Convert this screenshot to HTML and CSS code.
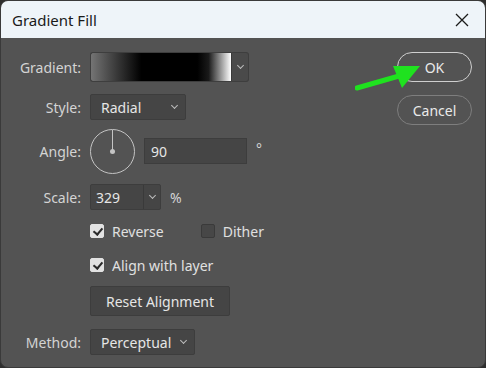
FILE: index.html
```html
<!DOCTYPE html>
<html lang="en">
<head>
    <meta charset="UTF-8">
    <meta name="viewport" content="width=device-width, initial-scale=1.0">
    <title>Gradient Fill</title>
    <link rel="stylesheet" href="styles.css">
</head>
<body>
    <div class="window">
        <div class="titlebar">
            <span class="title">Gradient Fill</span>
            <svg class="close" width="14" height="14" viewBox="0 0 14 14">
                <path d="M1 1L13 13M13 1L1 13" stroke="#1a1a1a" stroke-width="1.3" fill="none"/>
            </svg>
        </div>

        <div class="dialog">
            <div class="form">
                <div class="row row-gradient">
                    <label class="label">Gradient:</label>
                    <div class="gradient-picker">
                        <div class="swatch"></div>
                        <div class="swatch-arrow"><span class="chev"></span></div>
                    </div>
                </div>

                <div class="row row-style">
                    <label class="label">Style:</label>
                    <div class="select select-style">Radial<span class="chev"></span></div>
                </div>

                <div class="row row-angle">
                    <label class="label">Angle:</label>
                    <div class="dial"><span class="dial-line"></span><span class="dial-dot"></span></div>
                    <div class="field field-angle">90</div>
                    <span class="unit unit-deg">°</span>
                </div>

                <div class="row row-scale">
                    <label class="label">Scale:</label>
                    <div class="combo">
                        <span class="combo-value">329</span>
                        <span class="combo-arrow"><span class="chev"></span></span>
                    </div>
                    <span class="unit">%</span>
                </div>

                <div class="row row-check">
                    <span class="label"></span>
                    <div class="check-group">
                        <span class="check checked"></span>
                        <span class="check-text">Reverse</span>
                    </div>
                    <div class="check-group check-dither">
                        <span class="check"></span>
                        <span class="check-text">Dither</span>
                    </div>
                </div>

                <div class="row row-check row-align">
                    <span class="label"></span>
                    <div class="check-group">
                        <span class="check checked"></span>
                        <span class="check-text">Align with layer</span>
                    </div>
                </div>

                <div class="row row-reset">
                    <span class="label"></span>
                    <button class="btn-reset">Reset Alignment</button>
                </div>

                <div class="row row-method">
                    <label class="label">Method:</label>
                    <div class="select select-method">Perceptual<span class="chev"></span></div>
                </div>
            </div>

            <div class="actions">
                <button class="btn-pill btn-ok">OK</button>
                <button class="btn-pill btn-cancel">Cancel</button>
            </div>

            <svg class="arrow" width="70" height="30" viewBox="0 0 70 30">
                <path d="M2 27L44 15" stroke="#1fe21f" stroke-width="5" stroke-linecap="round"/>
                <polygon points="38,5 65,5 47,27" fill="#1fe21f"/>
            </svg>
        </div>
    </div>
</body>
</html>
```

FILE: styles.css
```css
* {
    margin: 0;
    padding: 0;
    box-sizing: border-box;
    font-family: "Noto Sans", "Open Sans", sans-serif;
}

body {
    background-color: #2e2e2e;
    width: 486px;
    height: 368px;
    overflow: hidden;
}

.window {
    width: 486px;
    height: 368px;
    border: 1px solid #3a3a3a;
    border-radius: 8px;
    overflow: hidden;
    background-color: #535353;
    display: flex;
    flex-direction: column;
}

.titlebar {
    height: 37px;
    background-color: #eef4f9;
    display: flex;
    align-items: center;
    justify-content: space-between;
    padding: 0 16px 0 11px;
    flex-shrink: 0;
}

.title {
    font-size: 15px;
    color: #1a1a1a;
}

.close {
    display: block;
}

.dialog {
    flex: 1;
    position: relative;
    display: flex;
    padding: 14px 0 0 0;
}

.form {
    width: 300px;
    display: flex;
    flex-direction: column;
}

.row {
    display: flex;
    align-items: center;
}

.label {
    width: 80px;
    margin-right: 9px;
    text-align: right;
    font-size: 14px;
    color: #d4d4d4;
    flex-shrink: 0;
}

/* gradient */
.row-gradient {
    height: 30px;
}

.gradient-picker {
    display: flex;
    height: 30px;
}

.swatch {
    width: 141px;
    height: 30px;
    border: 1px solid #3e3e3e;
    border-right: none;
    border-radius: 3px 0 0 3px;
    background: linear-gradient(to right, #747474 0%, #3a3a3a 18%, #000 36%, #000 76%, #1a1a1a 84%, #fff 100%);
}

.swatch-arrow {
    width: 18px;
    height: 30px;
    border: 1px solid #3e3e3e;
    border-left: 1px solid #3a3a3a;
    border-radius: 0 3px 3px 0;
    background-color: #4a4a4a;
    display: flex;
    align-items: center;
    justify-content: center;
}

.chev {
    display: inline-block;
    width: 5px;
    height: 5px;
    border-right: 1px solid #bdbdbd;
    border-bottom: 1px solid #bdbdbd;
    transform: rotate(45deg);
    margin-top: -3px;
}

/* selects */
.select {
    height: 26px;
    background-color: #454545;
    border: 1px solid #3d3d3d;
    border-radius: 2px;
    color: #e6e6e6;
    font-size: 14px;
    display: flex;
    align-items: center;
    justify-content: space-between;
    padding: 0 8px 0 10px;
}

.row-style {
    margin-top: 12px;
}

.select-style {
    width: 96px;
}

/* angle */
.row-angle {
    margin-top: 8px;
    height: 46px;
}

.dial {
    width: 45px;
    height: 45px;
    border: 1px solid #c4c4c4;
    border-radius: 50%;
    position: relative;
    flex-shrink: 0;
}

.dial-line {
    position: absolute;
    left: 21px;
    top: 0;
    width: 1px;
    height: 22px;
    background-color: #c4c4c4;
}

.dial-dot {
    position: absolute;
    left: 19px;
    top: 19px;
    width: 5px;
    height: 5px;
    border-radius: 50%;
    background-color: #c4c4c4;
}

.field {
    height: 26px;
    background-color: #454545;
    border: 1px solid #3d3d3d;
    color: #e6e6e6;
    font-size: 14px;
    display: flex;
    align-items: center;
    padding: 0 6px;
}

.field-angle {
    width: 103px;
    margin-left: 9px;
}

.unit {
    font-size: 14px;
    color: #d4d4d4;
    margin-left: 9px;
}

.unit-deg {
    margin-left: 9px;
    margin-top: -6px;
}

/* scale */
.row-scale {
    margin-top: 10px;
    height: 26px;
}

.combo {
    display: flex;
    width: 71px;
    height: 26px;
    border: 1px solid #3d3d3d;
    border-radius: 2px;
    background-color: #454545;
}

.combo-value {
    width: 53px;
    border-right: 1px solid #3a3a3a;
    color: #e6e6e6;
    font-size: 14px;
    display: flex;
    align-items: center;
    padding-left: 5px;
}

.combo-arrow {
    flex: 1;
    display: flex;
    align-items: center;
    justify-content: center;
}

/* checkboxes */
.row-check {
    margin-top: 14px;
    height: 14px;
}

.row-align {
    margin-top: 20px;
}

.check-group {
    display: flex;
    align-items: center;
}

.check {
    width: 14px;
    height: 14px;
    border-radius: 2px;
    border: 1px solid #3a3a3a;
    background-color: #474747;
    position: relative;
}

.check.checked {
    background-color: #e2e2e2;
    border-color: #e2e2e2;
}

.check.checked::after {
    content: "";
    position: absolute;
    left: 4px;
    top: 1px;
    width: 4px;
    height: 7px;
    border-right: 2px solid #2a2a2a;
    border-bottom: 2px solid #2a2a2a;
    transform: rotate(40deg);
}

.check-text {
    font-size: 14px;
    color: #e0e0e0;
    margin-left: 8px;
}

.check-dither {
    margin-left: 37px;
}

/* reset */
.row-reset {
    margin-top: 14px;
}

.btn-reset {
    width: 140px;
    height: 30px;
    background-color: #454545;
    border: 1px solid #3d3d3d;
    border-radius: 2px;
    color: #e6e6e6;
    font-size: 14px;
}

/* method */
.row-method {
    margin-top: 13px;
}

.select-method {
    width: 105px;
}

/* right side buttons */
.actions {
    margin-left: 96px;
    display: flex;
    flex-direction: column;
    gap: 13px;
}

.btn-pill {
    width: 75px;
    height: 30px;
    border-radius: 15px;
    background-color: transparent;
    color: #eaeaea;
    font-size: 14px;
}

.btn-ok {
    border: 1px solid #cfcfcf;
}

.btn-cancel {
    border: 1px solid #7e7e7e;
}

.arrow {
    position: absolute;
    left: 354px;
    top: 23px;
}
```
